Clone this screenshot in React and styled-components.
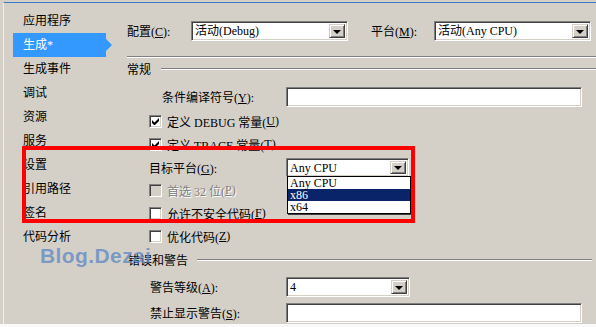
import React from 'react';
import styled, { createGlobalStyle } from 'styled-components';

const GlobalStyle = createGlobalStyle`
  html, body {
    margin: 0;
    padding: 0;
    background: #d4d0c8;
  }
  body {
    font-family: "Liberation Serif", "Noto Sans CJK SC", serif;
    font-size: 12px;
    color: #000;
  }
`;

const Root = styled.div`
  position: relative;
  width: 596px;
  height: 327px;
  overflow: hidden;
  background: #d4d0c8;
  display: flex;
  flex-direction: column;
`;

const Frame = styled.div`
  position: relative;
  z-index: 1;
  margin: 2px 0 0 3px;
  height: 321px;
  border-top: 1px solid #3d78c8;
  border-left: 1px solid #efeee9;
  display: flex;
`;

const BottomStrip = styled.div`
  flex: 1;
  background: #fafafa;
`;

const Sidebar = styled.ul`
  list-style: none;
  margin: 0;
  box-sizing: border-box;
  width: 123px;
  padding: 6px 0 0 9px;
`;

const NavItem = styled.li`
  position: relative;
  width: 93px;
  height: 24px;
  line-height: 24px;
  padding-left: 10px;
  box-sizing: border-box;
  background: ${p => (p.$active ? '#3399ff' : 'transparent')};
  color: ${p => (p.$active ? '#fff' : '#000')};
  &::after {
    content: '';
    display: ${p => (p.$active ? 'block' : 'none')};
    position: absolute;
    left: 100%;
    top: 6px;
    border-top: 6px solid transparent;
    border-bottom: 6px solid transparent;
    border-left: 6px solid #3399ff;
  }
`;

const Main = styled.div`
  flex: 1;
  display: flex;
  flex-direction: column;
  padding-top: 18px;
`;

const TopRow = styled.div`
  display: flex;
  align-items: center;
  height: 20px;
`;

const TopLabel = styled.span`
  width: ${p => p.$w}px;
  white-space: nowrap;
`;

const Spacer = styled.span`
  width: ${p => p.$w}px;
`;

const Divider = styled.div`
  margin-top: 15px;
  border-top: 1px solid #808080;
  border-bottom: 1px solid #fff;
`;

const SectionHeader = styled.div`
  display: flex;
  align-items: center;
  height: ${p => p.$h}px;
  padding-left: ${p => p.$indent || 0}px;
  margin-right: ${p => p.$right || 0}px;
  white-space: nowrap;
  &::after {
    content: '';
    flex: 1;
    margin-left: ${p => p.$gap}px;
    border-top: 1px solid #808080;
    border-bottom: 1px solid #fff;
  }
`;

const FieldRow = styled.div`
  display: grid;
  grid-template-columns: 159px auto;
  align-items: center;
  height: ${p => p.$h}px;
  margin-top: ${p => p.$mt || 0}px;
`;

const FieldLabel = styled.span`
  padding-left: ${p => p.$indent}px;
  white-space: nowrap;
`;

const CheckList = styled.div`
  margin-top: 2px;
  display: flex;
  flex-direction: column;
`;

const CheckRow = styled.label`
  display: flex;
  align-items: center;
  height: 23px;
  padding-left: 22px;
  white-space: nowrap;
  color: ${p => (p.$disabled ? '#808080' : '#000')};
  text-shadow: ${p => (p.$disabled ? '1px 1px 0 #fff' : 'none')};
`;

const sunken = `
  border: 1px solid;
  border-color: #808080 #fff #fff #808080;
  box-shadow: inset 1px 1px #404040, inset -1px -1px #d4d0c8;
`;

const CheckBox = styled.span`
  box-sizing: border-box;
  width: 13px;
  height: 13px;
  margin-right: 5px;
  background: ${p => (p.$disabled ? '#d4d0c8' : '#fff')};
  ${sunken}
  display: inline-flex;
  align-items: center;
  justify-content: center;
`;

const TextBox = styled.div`
  box-sizing: border-box;
  width: ${p => p.$w}px;
  height: 20px;
  background: #fff;
  ${sunken}
`;

const Combo = styled.div`
  position: relative;
  box-sizing: border-box;
  width: ${p => p.$w}px;
  height: ${p => p.$h || 20}px;
  background: #fff;
  ${sunken}
  display: flex;
  align-items: center;
  padding: 2px;
`;

const ComboText = styled.span`
  flex: 1;
  padding-left: 1px;
  white-space: nowrap;
  overflow: hidden;
  line-height: 14px;
`;

const DropButton = styled.span`
  box-sizing: border-box;
  width: 16px;
  height: 100%;
  background: #d4d0c8;
  border: 1px solid;
  border-color: #d4d0c8 #404040 #404040 #d4d0c8;
  box-shadow: inset 1px 1px #fff, inset -1px -1px #808080;
  display: flex;
  align-items: center;
  justify-content: center;
  &::before {
    content: '';
    border-top: 4px solid #000;
    border-left: 4px solid transparent;
    border-right: 4px solid transparent;
    margin-top: 1px;
  }
`;

const DropList = styled.ul`
  position: absolute;
  left: 0;
  top: 100%;
  width: 124px;
  box-sizing: border-box;
  margin: 0;
  padding: 0;
  list-style: none;
  background: #fff;
  border: 1px solid #000;
  box-shadow: 1px 1px 0 #404040;
`;

const DropItem = styled.li`
  height: 12px;
  line-height: 12px;
  padding-left: 2px;
  background: ${p => (p.$selected ? '#0a246a' : '#fff')};
  color: ${p => (p.$selected ? '#fff' : '#000')};
`;

const Watermark = styled.div`
  position: absolute;
  left: 40px;
  top: 244px;
  z-index: 3;
  font-family: "Liberation Sans", Arial, sans-serif;
  font-weight: bold;
  font-size: 21px;
  letter-spacing: 0.4px;
  color: rgba(88, 132, 196, 0.72);
  white-space: nowrap;
  pointer-events: none;
`;

const Highlight = styled.div`
  position: absolute;
  left: 22px;
  top: 146px;
  width: 393px;
  height: 77px;
  box-sizing: border-box;
  border: 4px solid #ff0000;
  z-index: 2;
  pointer-events: none;
`;

const Tick = () => (
  <svg width="7" height="7" viewBox="0 0 7 7">
    <path d="M0 2v3l2 2h1l4-4V0L2.5 4.5z" fill="#000" />
  </svg>
);

const Key = ({ k }) => (
  <>
    (<u>{k}</u>)
  </>
);

const navItems = ['应用程序', '生成*', '生成事件', '调试', '资源', '服务', '设置', '引用路径', '签名', '代码分析'];

const Check = ({ checked, disabled, children }) => (
  <CheckRow $disabled={disabled}>
    <CheckBox $disabled={disabled}>{checked && <Tick />}</CheckBox>
    {children}
  </CheckRow>
);

export default function App() {
  return (
    <Root>
      <GlobalStyle />
      <Frame>
        <Sidebar>
          {navItems.map(n => (
            <NavItem key={n} $active={n === '生成*'}>
              {n}
            </NavItem>
          ))}
        </Sidebar>
        <Main>
          <TopRow>
            <TopLabel $w={64}>
              配置<Key k="C" />:
            </TopLabel>
            <Combo $w={157}>
              <ComboText>活动(Debug)</ComboText>
              <DropButton />
            </Combo>
            <Spacer $w={23} />
            <TopLabel $w={63}>
              平台<Key k="M" />:
            </TopLabel>
            <Combo $w={157}>
              <ComboText>活动(Any CPU)</ComboText>
              <DropButton />
            </Combo>
          </TopRow>
          <Divider />
          <SectionHeader $h={22} $gap={10}>常规</SectionHeader>
          <FieldRow $h={22} $mt={6}>
            <FieldLabel $indent={35}>
              条件编译符号<Key k="Y" />:
            </FieldLabel>
            <TextBox $w={296} />
          </FieldRow>
          <CheckList>
            <Check checked>
              定义 DEBUG 常量<Key k="U" />
            </Check>
            <Check checked>
              定义 TRACE 常量<Key k="T" />
            </Check>
            <FieldRow $h={23}>
              <FieldLabel $indent={22}>
                目标平台<Key k="G" />:
              </FieldLabel>
              <Combo $w={123} $h={19}>
                <ComboText>Any CPU</ComboText>
                <DropButton />
                <DropList>
                  <DropItem>Any CPU</DropItem>
                  <DropItem $selected>x86</DropItem>
                  <DropItem>x64</DropItem>
                </DropList>
              </Combo>
            </FieldRow>
            <Check disabled>
              首选 32 位<Key k="P" />
            </Check>
            <Check>
              允许不安全代码<Key k="F" />
            </Check>
            <Check>
              优化代码<Key k="Z" />
            </Check>
          </CheckList>
          <SectionHeader $h={24} $gap={9} $indent={1} $right={4}>
            错误和警告
          </SectionHeader>
          <FieldRow $h={20} $mt={5}>
            <FieldLabel $indent={23}>
              警告等级<Key k="A" />:
            </FieldLabel>
            <Combo $w={124}>
              <ComboText>4</ComboText>
              <DropButton />
            </Combo>
          </FieldRow>
          <FieldRow $h={20} $mt={6}>
            <FieldLabel $indent={23}>
              禁止显示警告<Key k="S" />:
            </FieldLabel>
            <TextBox $w={296} />
          </FieldRow>
        </Main>
      </Frame>
      <BottomStrip />
      <Highlight />
      <Watermark>Blog.Dezai</Watermark>
    </Root>
  );
}
